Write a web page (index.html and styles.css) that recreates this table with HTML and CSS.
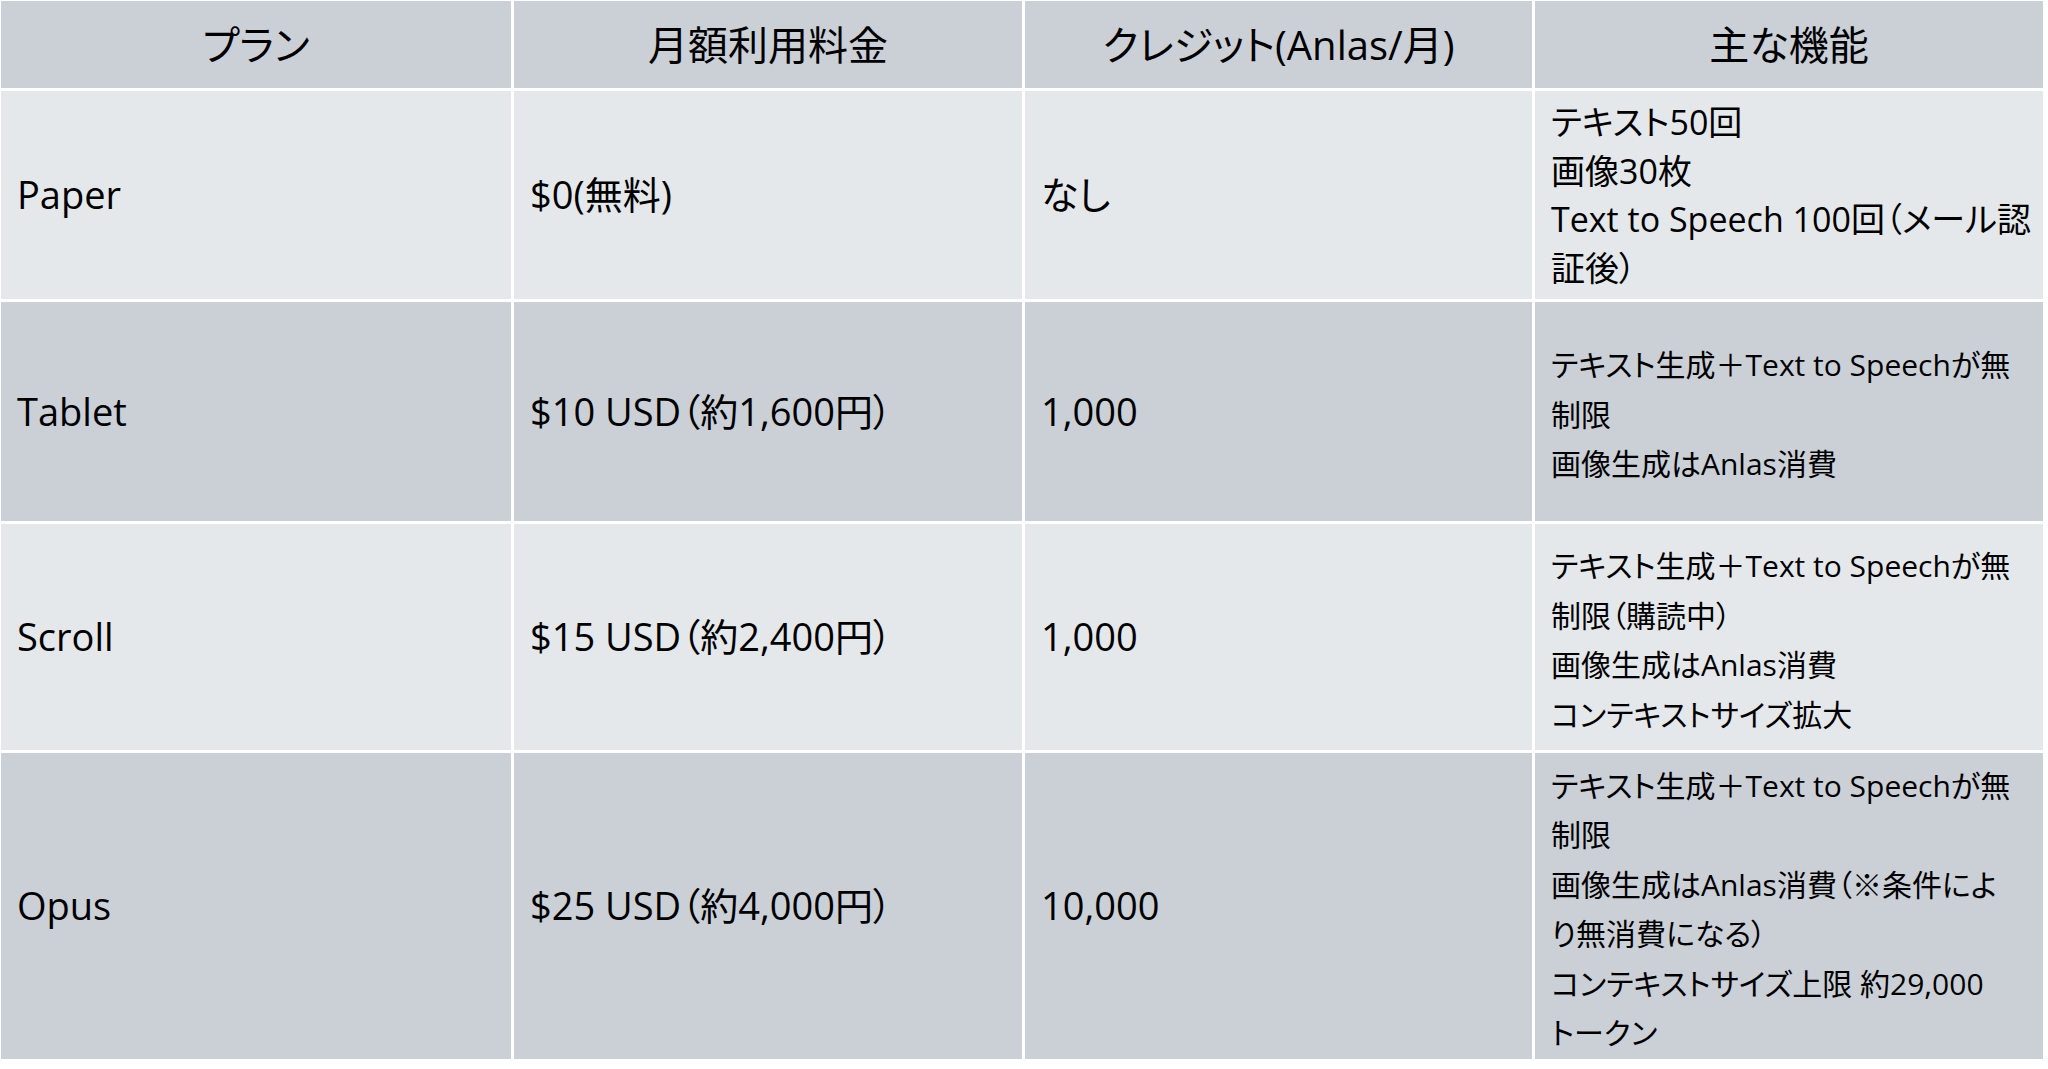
FILE: index.html
```html
<!DOCTYPE html>
<html lang="ja">
<head>
<meta charset="utf-8">
<title>プラン比較</title>
<link rel="stylesheet" href="styles.css">
</head>
<body>
<div class="pricing">
  <div class="row head">
    <div class="cell center">プラン</div>
    <div class="cell center">月額利用料金</div>
    <div class="cell center">クレジット(Anlas/月)</div>
    <div class="cell center">主な機能</div>
  </div>
  <div class="row light">
    <div class="cell">Paper</div>
    <div class="cell">$0(無料)</div>
    <div class="cell">なし</div>
    <div class="cell features large">テキスト50回<br>画像30枚<br>Text to Speech 100回（メール認<br>証後）</div>
  </div>
  <div class="row dark">
    <div class="cell">Tablet</div>
    <div class="cell">$10 USD（約1,600円）</div>
    <div class="cell">1,000</div>
    <div class="cell features">テキスト生成＋Text to Speechが無<br>制限<br>画像生成はAnlas消費</div>
  </div>
  <div class="row light">
    <div class="cell">Scroll</div>
    <div class="cell">$15 USD（約2,400円）</div>
    <div class="cell">1,000</div>
    <div class="cell features">テキスト生成＋Text to Speechが無<br>制限（購読中）<br>画像生成はAnlas消費<br>コンテキストサイズ拡大</div>
  </div>
  <div class="row dark">
    <div class="cell">Opus</div>
    <div class="cell">$25 USD（約4,000円）</div>
    <div class="cell">10,000</div>
    <div class="cell features">テキスト生成＋Text to Speechが無<br>制限<br>画像生成はAnlas消費（※条件によ<br>り無消費になる）<br>コンテキストサイズ上限 約29,000<br>トークン</div>
  </div>
</div>
</body>
</html>
```

FILE: styles.css
```css
html, body {
  margin: 0;
  padding: 0;
  background: #ffffff;
}

body {
  font-family: "Open Sans", "Noto Sans CJK JP", sans-serif;
  color: #000000;
  font-feature-settings: "palt";
}

.pricing {
  display: grid;
  grid-template-columns: 510px 508px 507px 508px;
  grid-template-rows: 87px 208px 219px 226px 306px;
  gap: 3px;
  margin: 1px 0 0 1px;
}

.row {
  display: contents;
}

.cell {
  display: flex;
  align-items: center;
  padding: 0 15px 0 16px;
  font-size: 38px;
  line-height: 1.3;
  white-space: nowrap;
}

.head .cell {
  background: #cbd0d7;
  font-size: 40px;
  padding: 0;
}

.light .cell {
  background: #e5e8eb;
}

.dark .cell {
  background: #cbd0d7;
}

.center {
  justify-content: center;
}

.features {
  padding: 6px 10px 0 16px;
  font-size: 30px;
  line-height: 49.5px;
}

.features.large {
  padding-top: 0;
  font-size: 34px;
  line-height: 48.5px;
}
```
